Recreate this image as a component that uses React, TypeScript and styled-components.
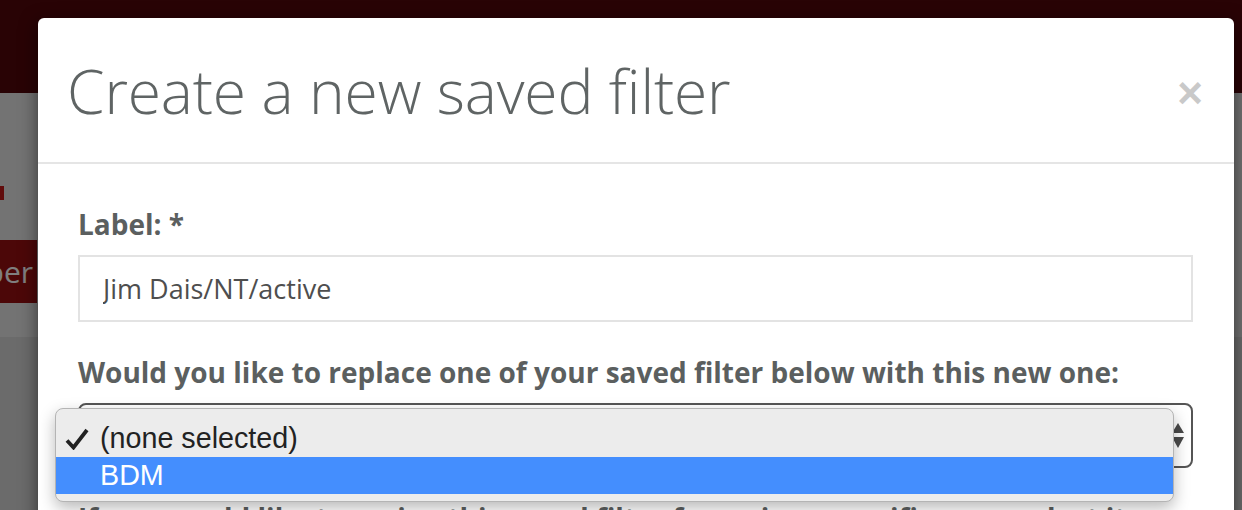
import React from 'react'
import styled, { createGlobalStyle } from 'styled-components'

const Global = createGlobalStyle`
  html, body { margin: 0; padding: 0; }
  body {
    width: 1242px; height: 510px; overflow: hidden;
    font-family: "Open Sans", "Liberation Sans", sans-serif;
  }
`

const Page = styled.div`
  position: relative; width: 1242px; height: 510px; overflow: hidden;
  background: #d6d6d6;
`

const TopBar = styled.header`
  height: 93px; background: #52060a;
`

const Toolbar = styled.div`
  height: 244px; background: #e6e6e6;
  display: flex; flex-direction: column; gap: 40px;
  padding-top: 93px; box-sizing: border-box;
`

const Marker = styled.span`
  width: 4px; height: 14px; background: #c21818;
`

const DarkButton = styled.div`
  display: flex; align-items: center; justify-content: flex-end;
  width: 120px; height: 63px; margin-left: -83px;
  background: #980f10; color: #fff;
  font-size: 30px; padding-right: 4px; box-sizing: border-box;
`

const Backdrop = styled.div`
  position: absolute; inset: 0; background: rgba(0, 0, 0, 0.5);
`

const Modal = styled.div`
  position: absolute; left: 38px; top: 18px; width: 1196px; height: 560px;
  background: #fff; border-radius: 6px;
  box-shadow: 0 5px 18px rgba(0, 0, 0, 0.55);
`

const ModalHeader = styled.div`
  display: flex; align-items: center; justify-content: space-between;
  padding: 40px 31px 38px 29px;
  border-bottom: 2px solid #e5e5e5;
`

const Title = styled.h4`
  margin: 0; font-size: 60.5px; line-height: 66px; font-weight: 300;
  color: #5f6464; letter-spacing: -0.15px;
`

const Close = styled.span`
  font-size: 44px; font-weight: 700; line-height: 1; color: #c9c9c9;
  font-family: "Liberation Sans", sans-serif;
  margin-top: 4px;
`

const ModalBody = styled.div`
  padding: 40px 41px 40px 40px;
`

const FormGroup = styled.div`
  margin-bottom: 30px;
`

const Label = styled.label`
  display: block; margin-bottom: 11px;
  font-size: 28px; line-height: 40px; font-weight: 700; color: #5b5f5f;
  white-space: nowrap;
`

const TextInput = styled.input`
  display: block; width: 100%; height: 67px; box-sizing: border-box;
  border: 2px solid #e3e3e3; border-radius: 0; padding: 0 23px;
  font-family: "Open Sans", sans-serif; font-size: 27px; color: #4e4e4e;
  outline: none; background: #fff;
`

const SelectWrap = styled.div`
  position: relative;
`

const SelectBox = styled.div`
  display: flex; align-items: center; justify-content: flex-end;
  height: 65px; box-sizing: border-box; padding-right: 7px;
  border: 2px solid #555; border-radius: 8px; background: #fff;
`

const Popup = styled.ul`
  position: absolute; left: -23px; top: 5px; width: 1119px;
  margin: 0; padding: 11px 0 7px; list-style: none; box-sizing: border-box;
  background: #ececec; border: 1px solid #b4b4b4; border-radius: 8px;
  box-shadow: 0 6px 16px rgba(0, 0, 0, 0.28);
  font-family: "Liberation Sans", Arial, sans-serif; font-size: 28.7px;
`

const Option = styled.li<{ $active?: boolean }>`
  display: flex; align-items: center; height: 37px;
  background: ${(p) => (p.$active ? '#448efe' : 'transparent')};
  color: ${(p) => (p.$active ? '#fff' : '#222')};
`

const CheckCell = styled.span`
  display: flex; align-items: center; justify-content: flex-start;
  width: 44px; padding-left: 9px; box-sizing: border-box;
`

const Check = () => (
  <svg width="24" height="22" viewBox="0 0 24 22">
    <path d="M2 12.5 L8.5 19.5 L22 2" fill="none" stroke="#222" strokeWidth="3.8" strokeLinejoin="miter" />
  </svg>
)

const Arrows = () => (
  <svg width="12" height="26" viewBox="0 0 12 26">
    <path d="M6 0 L12 10 L0 10 Z" fill="#4a4a4a" />
    <path d="M0 14 L12 14 L6 25 Z" fill="#4a4a4a" />
  </svg>
)

export default function App() {
  return (
    <Page>
      <Global />
      <TopBar />
      <Toolbar>
        <Marker />
        <DarkButton>Member</DarkButton>
      </Toolbar>
      <Backdrop />
      <Modal role="dialog">
        <ModalHeader>
          <Title>Create a new saved filter</Title>
          <Close aria-label="Close">×</Close>
        </ModalHeader>
        <ModalBody>
          <FormGroup>
            <Label>Label: *</Label>
            <TextInput defaultValue="Jim Dais/NT/active" readOnly />
          </FormGroup>
          <FormGroup>
            <Label>Would you like to replace one of your saved filter below with this new one:</Label>
            <SelectWrap>
              <SelectBox>
                <Arrows />
              </SelectBox>
              <Popup>
                <Option>
                  <CheckCell><Check /></CheckCell>
                  (none selected)
                </Option>
                <Option $active>
                  <CheckCell />
                  BDM
                </Option>
              </Popup>
            </SelectWrap>
          </FormGroup>
          <FormGroup>
            <Label>If you would like to assign this saved filter for a given specific user, select it:</Label>
          </FormGroup>
        </ModalBody>
      </Modal>
    </Page>
  )
}
